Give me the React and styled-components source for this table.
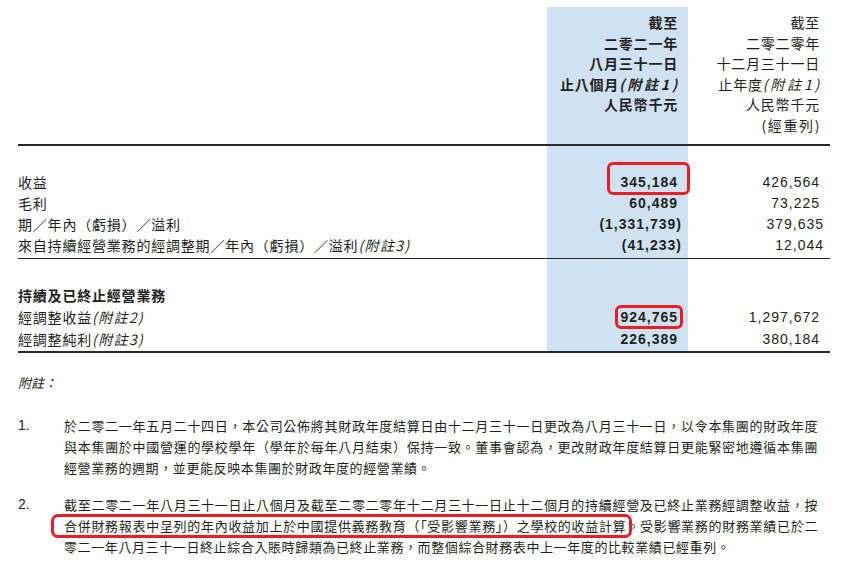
import React from 'react';
import styled, { createGlobalStyle } from 'styled-components';

const GlobalStyle = createGlobalStyle`
    body {
        margin: 0;
        background: #fff;
        color: #231f20;
        font-family: 'Liberation Sans', 'Noto Sans CJK TC', sans-serif;
    }
`;

const header = {
    current: ['截至', '二零二一年', '八月三十一日', ['止八個月', '1'], '人民幣千元'],
    prior: ['截至', '二零二零年', '十二月三十一日', ['止年度', '1'], '人民幣千元', '(經重列)'],
};

const rows = [
    { label: '收益', cur: '345,184', prev: '426,564', mark: true },
    { label: '毛利', cur: '60,489', prev: '73,225' },
    { label: '期／年內（虧損）／溢利', cur: '(1,331,739)', prev: '379,635', paren: true },
    { label: '來自持續經營業務的經調整期／年內（虧損）／溢利', note: '3', cur: '(41,233)', prev: '12,044', paren: true },
];

const rows2 = [
    { label: '經調整收益', note: '2', cur: '924,765', prev: '1,297,672', mark: true, small: true },
    { label: '經調整純利', note: '3', cur: '226,389', prev: '380,184' },
];

const Note = ({ n, wide }) => <Italic $wide={wide}>(附註{n})</Italic>;

const HeadLine = ({ line }) =>
    Array.isArray(line) ? (
        <div>
            {line[0]}
            <Note n={line[1]} wide />
        </div>
    ) : line.startsWith('(') ? (
        <Restated>{line}</Restated>
    ) : (
        <div>{line}</div>
    );

const Value = ({ row, bold }) => {
    const text = bold ? row.cur : row.prev;
    return (
        <ValueCell $shade={bold} $bold={bold} $paren={row.paren}>
            {bold && row.mark ? <Marked $small={row.small}>{text}</Marked> : text}
        </ValueCell>
    );
};

export default function App() {
    return (
        <Page>
            <GlobalStyle />
            <Table>
                <Section $top={5} $bottom={9} $rule={2} $lh={20.5}>
                    <Label />
                    <HeadCell $bold>
                        {header.current.map((l, i) => (
                            <HeadLine key={i} line={l} />
                        ))}
                    </HeadCell>
                    <HeadCell>
                        {header.prior.map((l, i) => (
                            <HeadLine key={i} line={l} />
                        ))}
                    </HeadCell>
                </Section>

                <Section $top={26} $bottom={2} $rule={1.5} $lh={21}>
                    {rows.map((r) => (
                        <React.Fragment key={r.label}>
                            <Label>
                                {r.label}
                                {r.note && <Note n={r.note} />}
                            </Label>
                            <Value row={r} bold />
                            <Value row={r} />
                        </React.Fragment>
                    ))}
                </Section>

                <Section $top={25} $bottom={1} $rule={2} $lh={22}>
                    <Label $bold>持續及已終止經營業務</Label>
                    <ValueCell />
                    <ValueCell />
                    {rows2.map((r) => (
                        <React.Fragment key={r.label}>
                            <Label>
                                {r.label}
                                <Note n={r.note} />
                            </Label>
                            <Value row={r} bold />
                            <Value row={r} />
                        </React.Fragment>
                    ))}
                </Section>
            </Table>

            <Notes>
                <NotesTitle>附註：</NotesTitle>
                <Item>
                    <Num>1.</Num>
                    <Body>
                        <Line>於二零二一年五月二十四日，本公司公佈將其財政年度結算日由十二月三十一日更改為八月三十一日，以令本集團的財政年度</Line>
                        <Line>與本集團於中國營運的學校學年（學年於每年八月結束）保持一致。董事會認為，更改財政年度結算日更能緊密地遵循本集團</Line>
                        <Line $last>經營業務的週期，並更能反映本集團於財政年度的經營業績。</Line>
                    </Body>
                </Item>
                <Item>
                    <Num>2.</Num>
                    <Body>
                        <Line>截至二零二一年八月三十一日止八個月及截至二零二零年十二月三十一日止十二個月的持續經營及已終止業務經調整收益，按</Line>
                        <Line>
                            <Boxed>合併財務報表中呈列的年內收益加上於中國提供義務教育（「受影響業務」）之學校的收益計算</Boxed>。受影響業務的財務業績已於二
                        </Line>
                        <Line $last>零二一年八月三十一日終止綜合入賬時歸類為已終止業務，而整個綜合財務表中上一年度的比較業績已經重列。</Line>
                    </Body>
                </Item>
            </Notes>
        </Page>
    );
}

const Page = styled.div`
    width: 851px;
    height: 570px;
    padding: 7px 21px 0 18px;
    box-sizing: border-box;
    overflow: hidden;
`;

const Table = styled.div`
    width: 812px;
    background: linear-gradient(
        to right,
        transparent 529px,
        #cfe2f4 529px,
        #cfe2f4 670px,
        transparent 670px
    );
`;

const Section = styled.div`
    display: grid;
    grid-template-columns: 529px 141px 142px;
    padding: ${(p) => p.$top}px 0 ${(p) => p.$bottom}px;
    border-bottom: ${(p) => p.$rule}px solid #2b2b2b;
    font-size: 14px;
    line-height: ${(p) => p.$lh}px;
`;

const Label = styled.div`
    font-family: 'Noto Sans CJK TC', sans-serif;
    letter-spacing: 0.8px;
    font-weight: ${(p) => (p.$bold ? 700 : 400)};
    white-space: nowrap;
`;

const HeadCell = styled.div`
    font-family: 'Noto Sans CJK TC', sans-serif;
    text-align: right;
    padding-right: 10px;
    letter-spacing: 0.8px;
    font-weight: ${(p) => (p.$bold ? 700 : 400)};
    white-space: nowrap;
`;

const Restated = styled.div`
    letter-spacing: 1.6px;
    margin-right: -1px;
`;

const Italic = styled.span`
    font-style: italic;
    font-weight: inherit;
    letter-spacing: ${(p) => (p.$wide ? 2.8 : 1.4)}px;
    margin-right: ${(p) => (p.$wide ? -2 : 0)}px;
`;

const ValueCell = styled.div`
    text-align: right;
    padding-right: ${(p) => (p.$paren ? 6 : 10)}px;
    letter-spacing: 1px;
    font-weight: ${(p) => (p.$bold ? 700 : 400)};
    white-space: nowrap;
`;

const Marked = styled.span`
    position: relative;
    &::after {
        content: '';
        position: absolute;
        left: ${(p) => (p.$small ? -5 : -13)}px;
        right: ${(p) => (p.$small ? -5 : -12)}px;
        top: ${(p) => (p.$small ? -4 : -12)}px;
        bottom: ${(p) => (p.$small ? -4 : -5)}px;
        border: 3px solid #ee1c25;
        border-radius: 6px;
    }
`;

const Notes = styled.div`
    font-family: 'Noto Sans CJK TC', sans-serif;
    font-size: 13px;
    width: 800px;
`;

const NotesTitle = styled.div`
    font-style: italic;
    line-height: 20px;
    margin-top: 20px;
    margin-bottom: 22px;
`;

const Item = styled.div`
    display: flex;
    margin-bottom: 16px;
`;

const Num = styled.div`
    width: 46px;
    flex: none;
    font-family: 'Liberation Sans', sans-serif;
    font-size: 14px;
    line-height: 21px;
`;

const Body = styled.div`
    width: 754px;
`;

const Line = styled.div`
    line-height: 21px;
    letter-spacing: 0.6px;
    text-align: ${(p) => (p.$last ? 'left' : 'justify')};
    text-align-last: ${(p) => (p.$last ? 'left' : 'justify')};
    white-space: ${(p) => (p.$last ? 'nowrap' : 'normal')};
`;

const Boxed = styled.span`
    position: relative;
    &::after {
        content: '';
        position: absolute;
        left: -13px;
        right: -6px;
        top: -2px;
        bottom: -3px;
        border: 3px solid #ee1c25;
        border-radius: 7px;
    }
`;
